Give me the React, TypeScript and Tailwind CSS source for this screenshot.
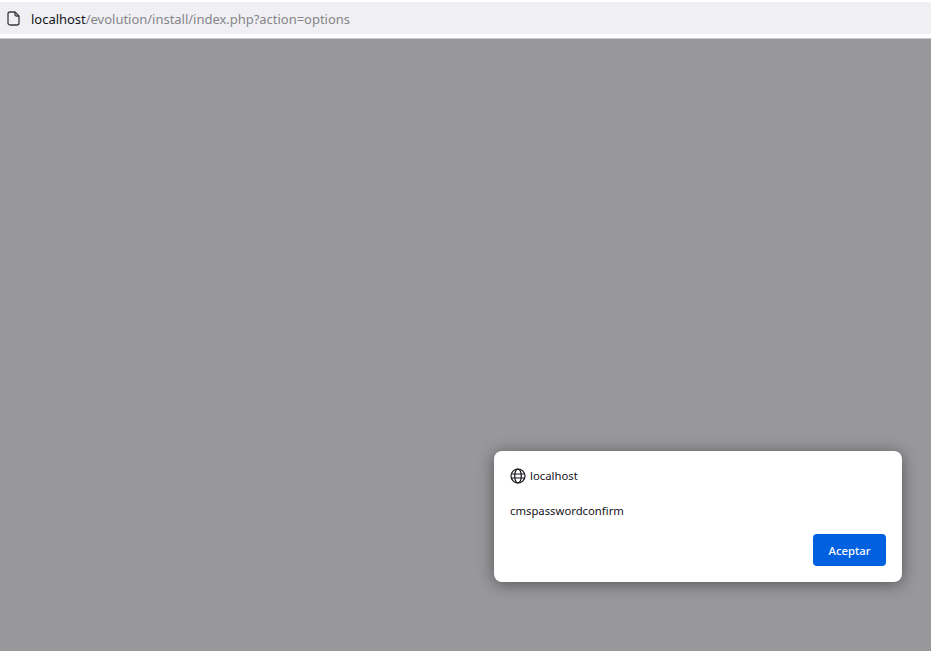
import React from "react";

export default function App() {
  return (
    <div className="flex h-[651px] w-[931px] flex-col overflow-hidden bg-[#98979b] font-['Noto_Sans','Open_Sans',sans-serif]">
      <header className="h-[39px] shrink-0 border-b border-b-[#c9c9cc] bg-white pt-[2px]">
        <div className="flex h-[32px] items-center bg-[#f0f0f4] pl-[7px]">
          <svg width="13" height="15" viewBox="0 0 13 15" fill="none" stroke="#3a3a3e" strokeWidth="1.3" className="shrink-0">
            <path d="M3 1h5l4 4v7a2 2 0 0 1-2 2H3a2 2 0 0 1-2-2V3a2 2 0 0 1 2-2z" strokeLinejoin="round" />
            <path d="M8 1v2.5A1.5 1.5 0 0 0 9.500 5H12" />
          </svg>
          <div className="ml-[11px] mt-[3px] text-[13px] tracking-[-0.02px] whitespace-nowrap">
            <span className="text-[#15141a]">localhost</span>
            <span className="text-[#85858a]">/evolution/install/index.php?action=options</span>
          </div>
        </div>
      </header>
      <main className="flex flex-1 items-end justify-end pr-[29px] pb-[69px]">
        <section className="flex h-[131px] w-[408px] flex-col rounded-[8px] bg-white px-[16px] pt-[16px] shadow-[0_2px_16px_rgba(0,0,0,0.45)]">
          <div className="flex h-[17px] items-center gap-[4px]">
            <svg width="16" height="16" viewBox="0 0 16 16" fill="none" stroke="#15141a" strokeWidth="1.2" className="shrink-0">
              <circle cx="8" cy="8" r="7" />
              <ellipse cx="8" cy="8" rx="3.300" ry="7" />
              <path d="M1.200 6h13.600M1.200 10h13.600" />
            </svg>
            <span className="pt-[1px] text-[11.300px] text-[#15141a]">localhost</span>
          </div>
          <p className="mt-[18px] text-[11.300px] leading-[17px] text-[#15141a]">cmspasswordconfirm</p>
          <div className="mt-[15px] flex justify-end">
            <button className="h-[32px] w-[73px] rounded-[4px] bg-[#0061e0] pt-[2px] text-[11.300px] font-medium text-[#fbfbfe]">Aceptar</button>
          </div>
        </section>
      </main>
    </div>
  );
}
